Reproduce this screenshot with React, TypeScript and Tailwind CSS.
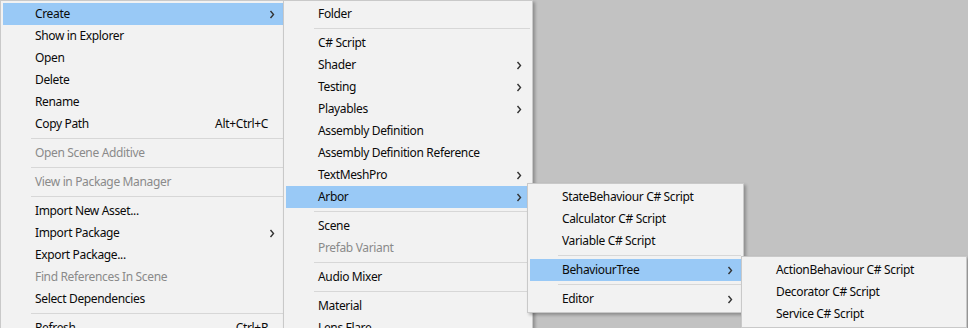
import React from 'react';

type Entry =
  | { sep: true }
  | { label: string; sub?: boolean; shortcut?: string; disabled?: boolean; active?: boolean };

const Chevron = () => (
  <svg width="6" height="9" viewBox="0 0 6 9" className="shrink-0">
    <polyline points="1.5,1 4.5,4.5 1.5,8" fill="none" stroke="#333333" strokeWidth="1.4" />
  </svg>
);

function Menu({ items, className }: { items: Entry[]; className: string }) {
  return (
    <div
      className={`absolute border border-[#c9c9c9] bg-[#f2f2f2] p-[2px] shadow-[2px_2px_3px_rgba(0,0,0,0.28)] ${className}`}
    >
      {items.map((it, i) =>
        'sep' in it ? (
          <div key={i} className="h-[7px] flex items-center pl-[28px]">
            <div className="h-px w-full bg-[#d7d7d7]" />
          </div>
        ) : (
          <div
            key={i}
            className={`h-[22px] flex items-center pl-[32px] pr-[8px] ${it.active ? 'bg-[#99c9f6]' : ''} ${
              it.disabled ? 'text-[#8a8a8a]' : 'text-[#0a0a0a]'
            }`}
          >
            <span className="flex-1 whitespace-nowrap">{it.label}</span>
            {it.shortcut && <span className="whitespace-nowrap pr-[7px]">{it.shortcut}</span>}
            {it.sub && <Chevron />}
          </div>
        )
      )}
    </div>
  );
}

const main: Entry[] = [
  { label: 'Create', sub: true, active: true },
  { label: 'Show in Explorer' },
  { label: 'Open' },
  { label: 'Delete' },
  { label: 'Rename' },
  { label: 'Copy Path', shortcut: 'Alt+Ctrl+C' },
  { sep: true },
  { label: 'Open Scene Additive', disabled: true },
  { sep: true },
  { label: 'View in Package Manager', disabled: true },
  { sep: true },
  { label: 'Import New Asset...' },
  { label: 'Import Package', sub: true },
  { label: 'Export Package...' },
  { label: 'Find References In Scene', disabled: true },
  { label: 'Select Dependencies' },
  { sep: true },
  { label: 'Refresh', shortcut: 'Ctrl+R' },
];

const create: Entry[] = [
  { label: 'Folder' },
  { sep: true },
  { label: 'C# Script' },
  { label: 'Shader', sub: true },
  { label: 'Testing', sub: true },
  { label: 'Playables', sub: true },
  { label: 'Assembly Definition' },
  { label: 'Assembly Definition Reference' },
  { label: 'TextMeshPro', sub: true },
  { label: 'Arbor', sub: true, active: true },
  { sep: true },
  { label: 'Scene' },
  { label: 'Prefab Variant', disabled: true },
  { sep: true },
  { label: 'Audio Mixer' },
  { sep: true },
  { label: 'Material' },
  { label: 'Lens Flare' },
];

const arbor: Entry[] = [
  { label: 'StateBehaviour C# Script' },
  { label: 'Calculator C# Script' },
  { label: 'Variable C# Script' },
  { sep: true },
  { label: 'BehaviourTree', sub: true, active: true },
  { sep: true },
  { label: 'Editor', sub: true },
];

const tree: Entry[] = [
  { label: 'ActionBehaviour C# Script' },
  { label: 'Decorator C# Script' },
  { label: 'Service C# Script' },
];

export default function App() {
  return (
    <div
      className="relative w-[968px] h-[328px] overflow-hidden bg-[#c2c2c2] text-[12px] leading-none tracking-[-0.35px]"
      style={{ fontFamily: '"Noto Sans", "Liberation Sans", sans-serif' }}
    >
      <Menu items={main} className="left-0 top-0 w-[286px]" />
      <Menu items={create} className="left-[283px] top-0 w-[250px]" />
      <Menu items={arbor} className="left-[527px] top-[183px] w-[217px]" />
      <Menu items={tree} className="left-[741px] top-[256px] w-[226px]" />
    </div>
  );
}
